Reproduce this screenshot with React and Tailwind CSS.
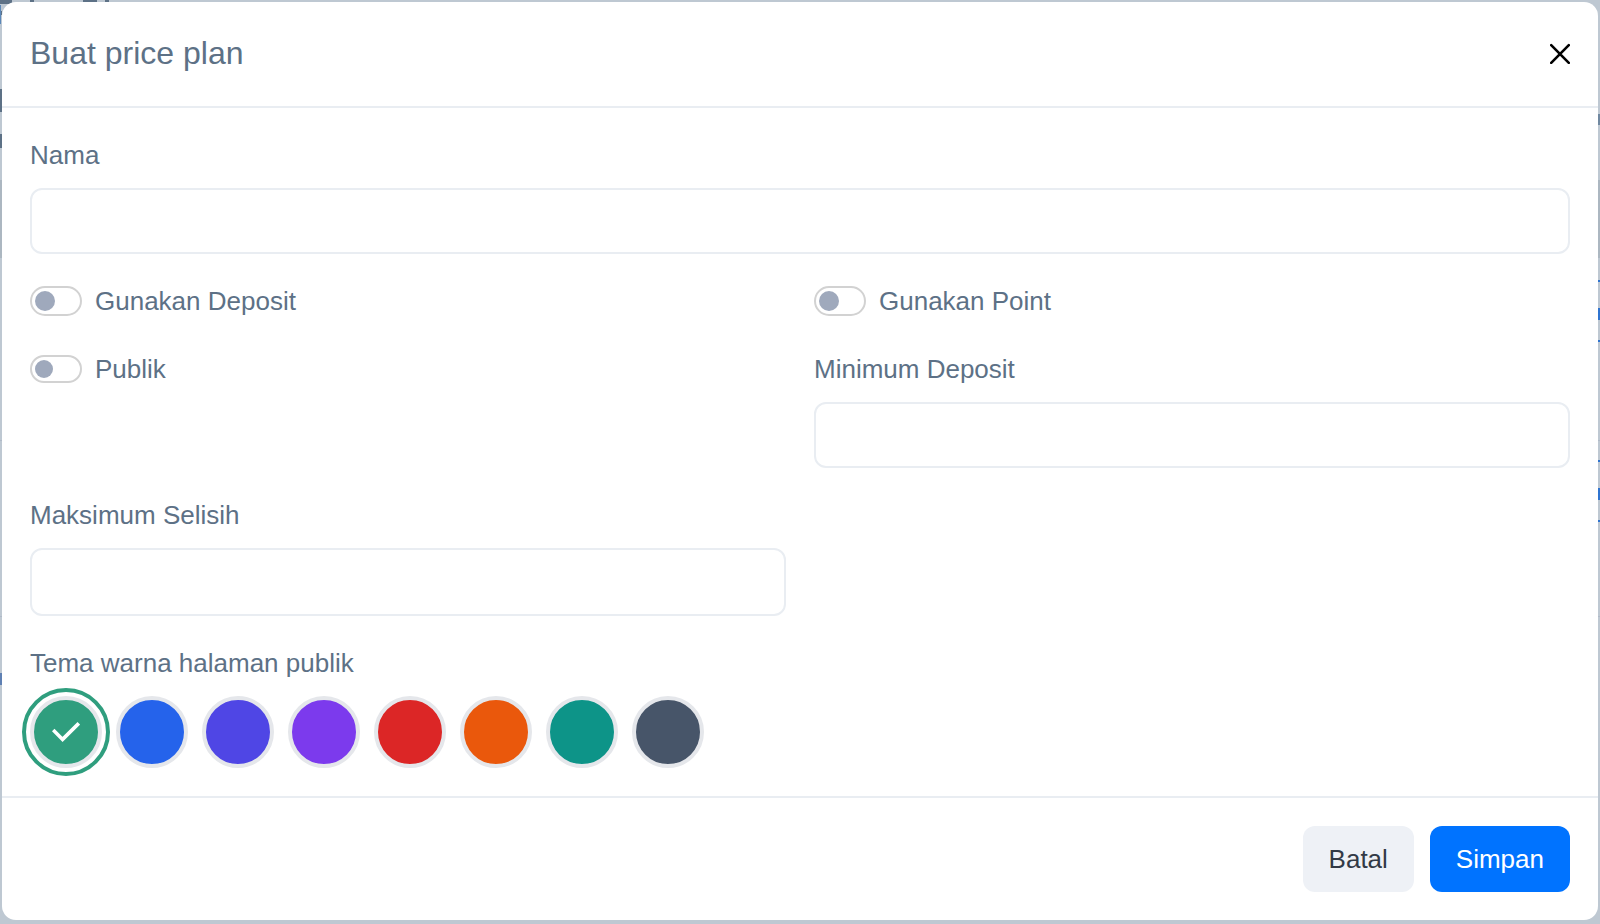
import { useState } from 'react'

const themes = [
  { name: 'Hijau', color: 'bg-[#2f9e7e]' },
  { name: 'Biru', color: 'bg-[#2563eb]' },
  { name: 'Indigo', color: 'bg-[#4f46e5]' },
  { name: 'Ungu', color: 'bg-[#7c3aed]' },
  { name: 'Merah', color: 'bg-[#dc2626]' },
  { name: 'Oranye', color: 'bg-[#ea580c]' },
  { name: 'Teal', color: 'bg-[#0d9488]' },
  { name: 'Abu-abu', color: 'bg-[#475569]' },
]

// Dimmed page that peeks out around the dialog
function PageBehind() {
  return (
    <svg aria-hidden="true" className="pointer-events-none absolute inset-0 h-full w-full">
      <rect y="180" width="100%" height="78" fill="#acb7c1" />
      <rect y="440" width="100%" height="1" fill="#b0bac8" />
      <rect y="616" width="100%" height="1" fill="#b0bac8" />
      <g fill="#5d7186">
        <rect width="12" height="4" />
        <rect x="30" width="4" height="2" />
        <rect x="83" width="14" height="2" />
        <rect x="105" width="4" height="2" />
        <rect y="11" width="2" height="4" />
        <rect y="89" width="2" height="23" />
        <rect y="134" width="2" height="14" />
      </g>
      <rect y="5" width="1" height="19" fill="#5b87b8" />
      <rect y="673" width="2" height="12" fill="#5f80b3" />
      <svg x="100%" overflow="visible">
        <rect x="-2" y="114" width="2" height="11" fill="#7088a0" />
        <g fill="#2f74d0">
          <rect x="-2" y="280" width="2" height="2" />
          <rect x="-2" y="308" width="2" height="12" />
          <rect x="-2" y="340" width="2" height="2" />
          <rect x="-2" y="460" width="2" height="2" />
          <rect x="-2" y="488" width="2" height="12" />
          <rect x="-2" y="520" width="2" height="2" />
        </g>
      </svg>
    </svg>
  )
}

function TextField({ id, label, className = 'h-[66px]' }) {
  return (
    <div className="flex flex-col gap-[14px]">
      <label htmlFor={id}>{label}</label>
      <input
        id={id}
        type="text"
        className={`w-full rounded-xl border-2 border-[#e9edf2] bg-white px-6 outline-none focus:border-[#0073ff] ${className}`}
      />
    </div>
  )
}

function Switch({ id, label, className = 'h-[30px]', knob = 'before:size-5' }) {
  return (
    <div className="flex h-[38px] items-center gap-[13px]">
      <input
        id={id}
        type="checkbox"
        role="switch"
        className={`flex w-[52px] shrink-0 appearance-none items-center rounded-full border-2 border-[#d2d2d2] bg-white px-[3px] before:rounded-full before:bg-[#9fa9bc] before:content-[''] checked:justify-end checked:before:bg-[#0073ff] ${className} ${knob}`}
      />
      <label htmlFor={id}>{label}</label>
    </div>
  )
}

export default function App() {
  const [theme, setTheme] = useState('Hijau')

  return (
    <div className="relative min-h-screen bg-[#bec8d2] px-0.5 pt-0.5 pb-1 font-['Liberation_Sans',Arial,sans-serif] text-[26px] leading-[38px] text-[#5d7186]">
      <PageBehind />
      <form
        role="dialog"
        aria-labelledby="dialog-title"
        onSubmit={(e) => e.preventDefault()}
        className="relative rounded-[14px] bg-white"
      >
        {/* Header */}
        <div className="flex items-center justify-between border-b-2 border-[#e9edf2] px-7 pt-[31px] pb-[33px]">
          <h5 id="dialog-title" className="text-[32px] leading-10">Buat price plan</h5>
          <button type="button" aria-label="Tutup" className="text-black">
            <svg width="20" height="22" viewBox="0 -2 20 22" fill="none" stroke="currentColor" strokeWidth="2.6" strokeLinecap="round">
              <path d="M1.2 1.2l17.6 17.6M18.8 1.2L1.2 18.8" />
            </svg>
          </button>
        </div>

        {/* Body */}
        <div className="flex flex-col gap-7 p-7">
          <TextField id="nama" label="Nama" />

          <div className="grid grid-cols-2 gap-x-7 gap-y-[30px]">
            <Switch id="deposit" label="Gunakan Deposit" />
            <Switch id="point" label="Gunakan Point" />
            <Switch id="publik" label="Publik" className="h-7" knob="before:size-[18px]" />
            <TextField id="minimum" label="Minimum Deposit" />
          </div>

          <div className="grid grid-cols-2 gap-7">
            <TextField id="selisih" label="Maksimum Selisih" className="h-[68px]" />
          </div>

          <fieldset>
            <legend className="mb-[14px]">Tema warna halaman publik</legend>
            <div className="flex flex-wrap gap-[14px]">
              {themes.map((t) => (
                <button
                  key={t.name}
                  type="button"
                  aria-label={t.name}
                  aria-pressed={theme === t.name}
                  onClick={() => setTheme(t.name)}
                  className={`flex size-[72px] items-center justify-center rounded-full border-4 border-[#e5e7eb] text-white ${t.color} ${
                    theme === t.name ? 'outline-4 outline-offset-4 outline-[#2f9e7e]' : ''
                  }`}
                >
                  {theme === t.name && (
                    <svg width="28" height="20" viewBox="0 0 28 20" fill="none" stroke="currentColor" strokeWidth="3.6">
                      <path d="M1.2 8l9.4 9.4L26.8 1.4" />
                    </svg>
                  )}
                </button>
              ))}
            </div>
          </fieldset>
        </div>

        {/* Footer */}
        <div className="flex justify-end gap-4 border-t-2 border-[#e9edf2] p-7">
          <button type="button" className="h-[66px] rounded-xl bg-[#eef1f6] px-[26px] text-[#323a46]">
            Batal
          </button>
          <button type="submit" className="h-[66px] rounded-xl bg-[#0073ff] px-[26px] text-white">
            Simpan
          </button>
        </div>
      </form>
    </div>
  )
}
